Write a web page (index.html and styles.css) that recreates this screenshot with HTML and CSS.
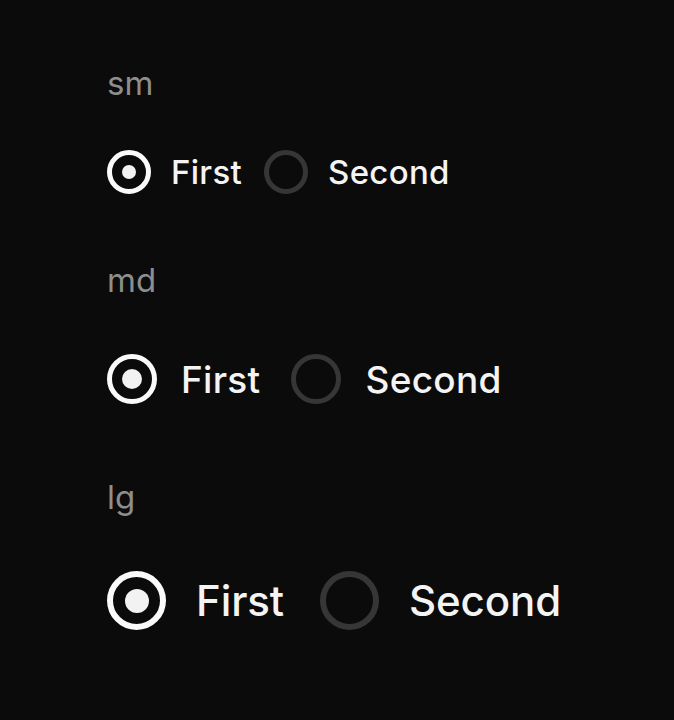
FILE: index.html
```html
<!DOCTYPE html>
<html lang="en">
<head>
<meta charset="utf-8">
<title>Radio sizes</title>
<link rel="stylesheet" href="styles.css">
</head>
<body>
<main class="page">
  <section class="group group-sm">
    <div class="size-label">sm</div>
    <div class="radio-group" role="radiogroup">
      <label class="radio">
        <span class="control checked"></span>
        <span class="text">First</span>
      </label>
      <label class="radio">
        <span class="control"></span>
        <span class="text">Second</span>
      </label>
    </div>
  </section>
  <section class="group group-md">
    <div class="size-label">md</div>
    <div class="radio-group" role="radiogroup">
      <label class="radio">
        <span class="control checked"></span>
        <span class="text">First</span>
      </label>
      <label class="radio">
        <span class="control"></span>
        <span class="text">Second</span>
      </label>
    </div>
  </section>
  <section class="group group-lg">
    <div class="size-label">lg</div>
    <div class="radio-group" role="radiogroup">
      <label class="radio">
        <span class="control checked"></span>
        <span class="text">First</span>
      </label>
      <label class="radio">
        <span class="control"></span>
        <span class="text">Second</span>
      </label>
    </div>
  </section>
</main>
</body>
</html>
```

FILE: styles.css
```css
html, body {
  margin: 0;
  padding: 0;
  background: #0b0b0b;
}

body {
  font-family: Inter, "Noto Sans", sans-serif;
  color: #f4f4f4;
  min-height: 720px;
}

.page {
  padding: 63px 0 0 107px;
  display: flex;
  flex-direction: column;
}

.size-label {
  font-size: 33px;
  line-height: 40px;
  height: 40px;
  color: #8e8e8e;
}

.radio-group {
  display: flex;
  align-items: center;
}

.radio {
  display: flex;
  align-items: center;
}

.control {
  position: relative;
  box-sizing: border-box;
  border-radius: 50%;
  border-style: solid;
  border-color: #363636;
  flex: none;
}

.control.checked {
  border-color: #fafafa;
}

.control.checked::after {
  content: "";
  position: absolute;
  left: 50%;
  top: 50%;
  border-radius: 50%;
  background: #f2f2f2;
  transform: translate(-50%, -50%);
}

.text {
  line-height: 1;
  white-space: nowrap;
  font-weight: 500;
  letter-spacing: 0.3px;
}

/* sm */
.group-sm .radio-group { margin-top: 47px; height: 44px; }
.group-sm .radio { gap: 20px; }
.group-sm .radio + .radio { margin-left: 22px; }
.group-sm .control { width: 44px; height: 44px; border-width: 5px; }
.group-sm .control.checked::after { width: 14px; height: 14px; }
.group-sm .text { font-size: 33px; }

/* md */
.group-md { margin-top: 66px; }
.group-md .radio-group { margin-top: 54px; height: 50px; }
.group-md .radio { gap: 24px; }
.group-md .radio + .radio { margin-left: 31px; }
.group-md .control { width: 50px; height: 50px; border-width: 5.5px; }
.group-md .control.checked::after { width: 20px; height: 20px; }
.group-md .text { font-size: 37px; }

/* lg */
.group-lg { margin-top: 73px; }
.group-lg .radio-group { margin-top: 54px; height: 59px; }
.group-lg .radio { gap: 30px; }
.group-lg .radio + .radio { margin-left: 36px; }
.group-lg .control { width: 59px; height: 59px; border-width: 6px; }
.group-lg .control.checked::after { width: 24px; height: 24px; }
.group-lg .text { font-size: 42px; letter-spacing: -0.1px; }
```
